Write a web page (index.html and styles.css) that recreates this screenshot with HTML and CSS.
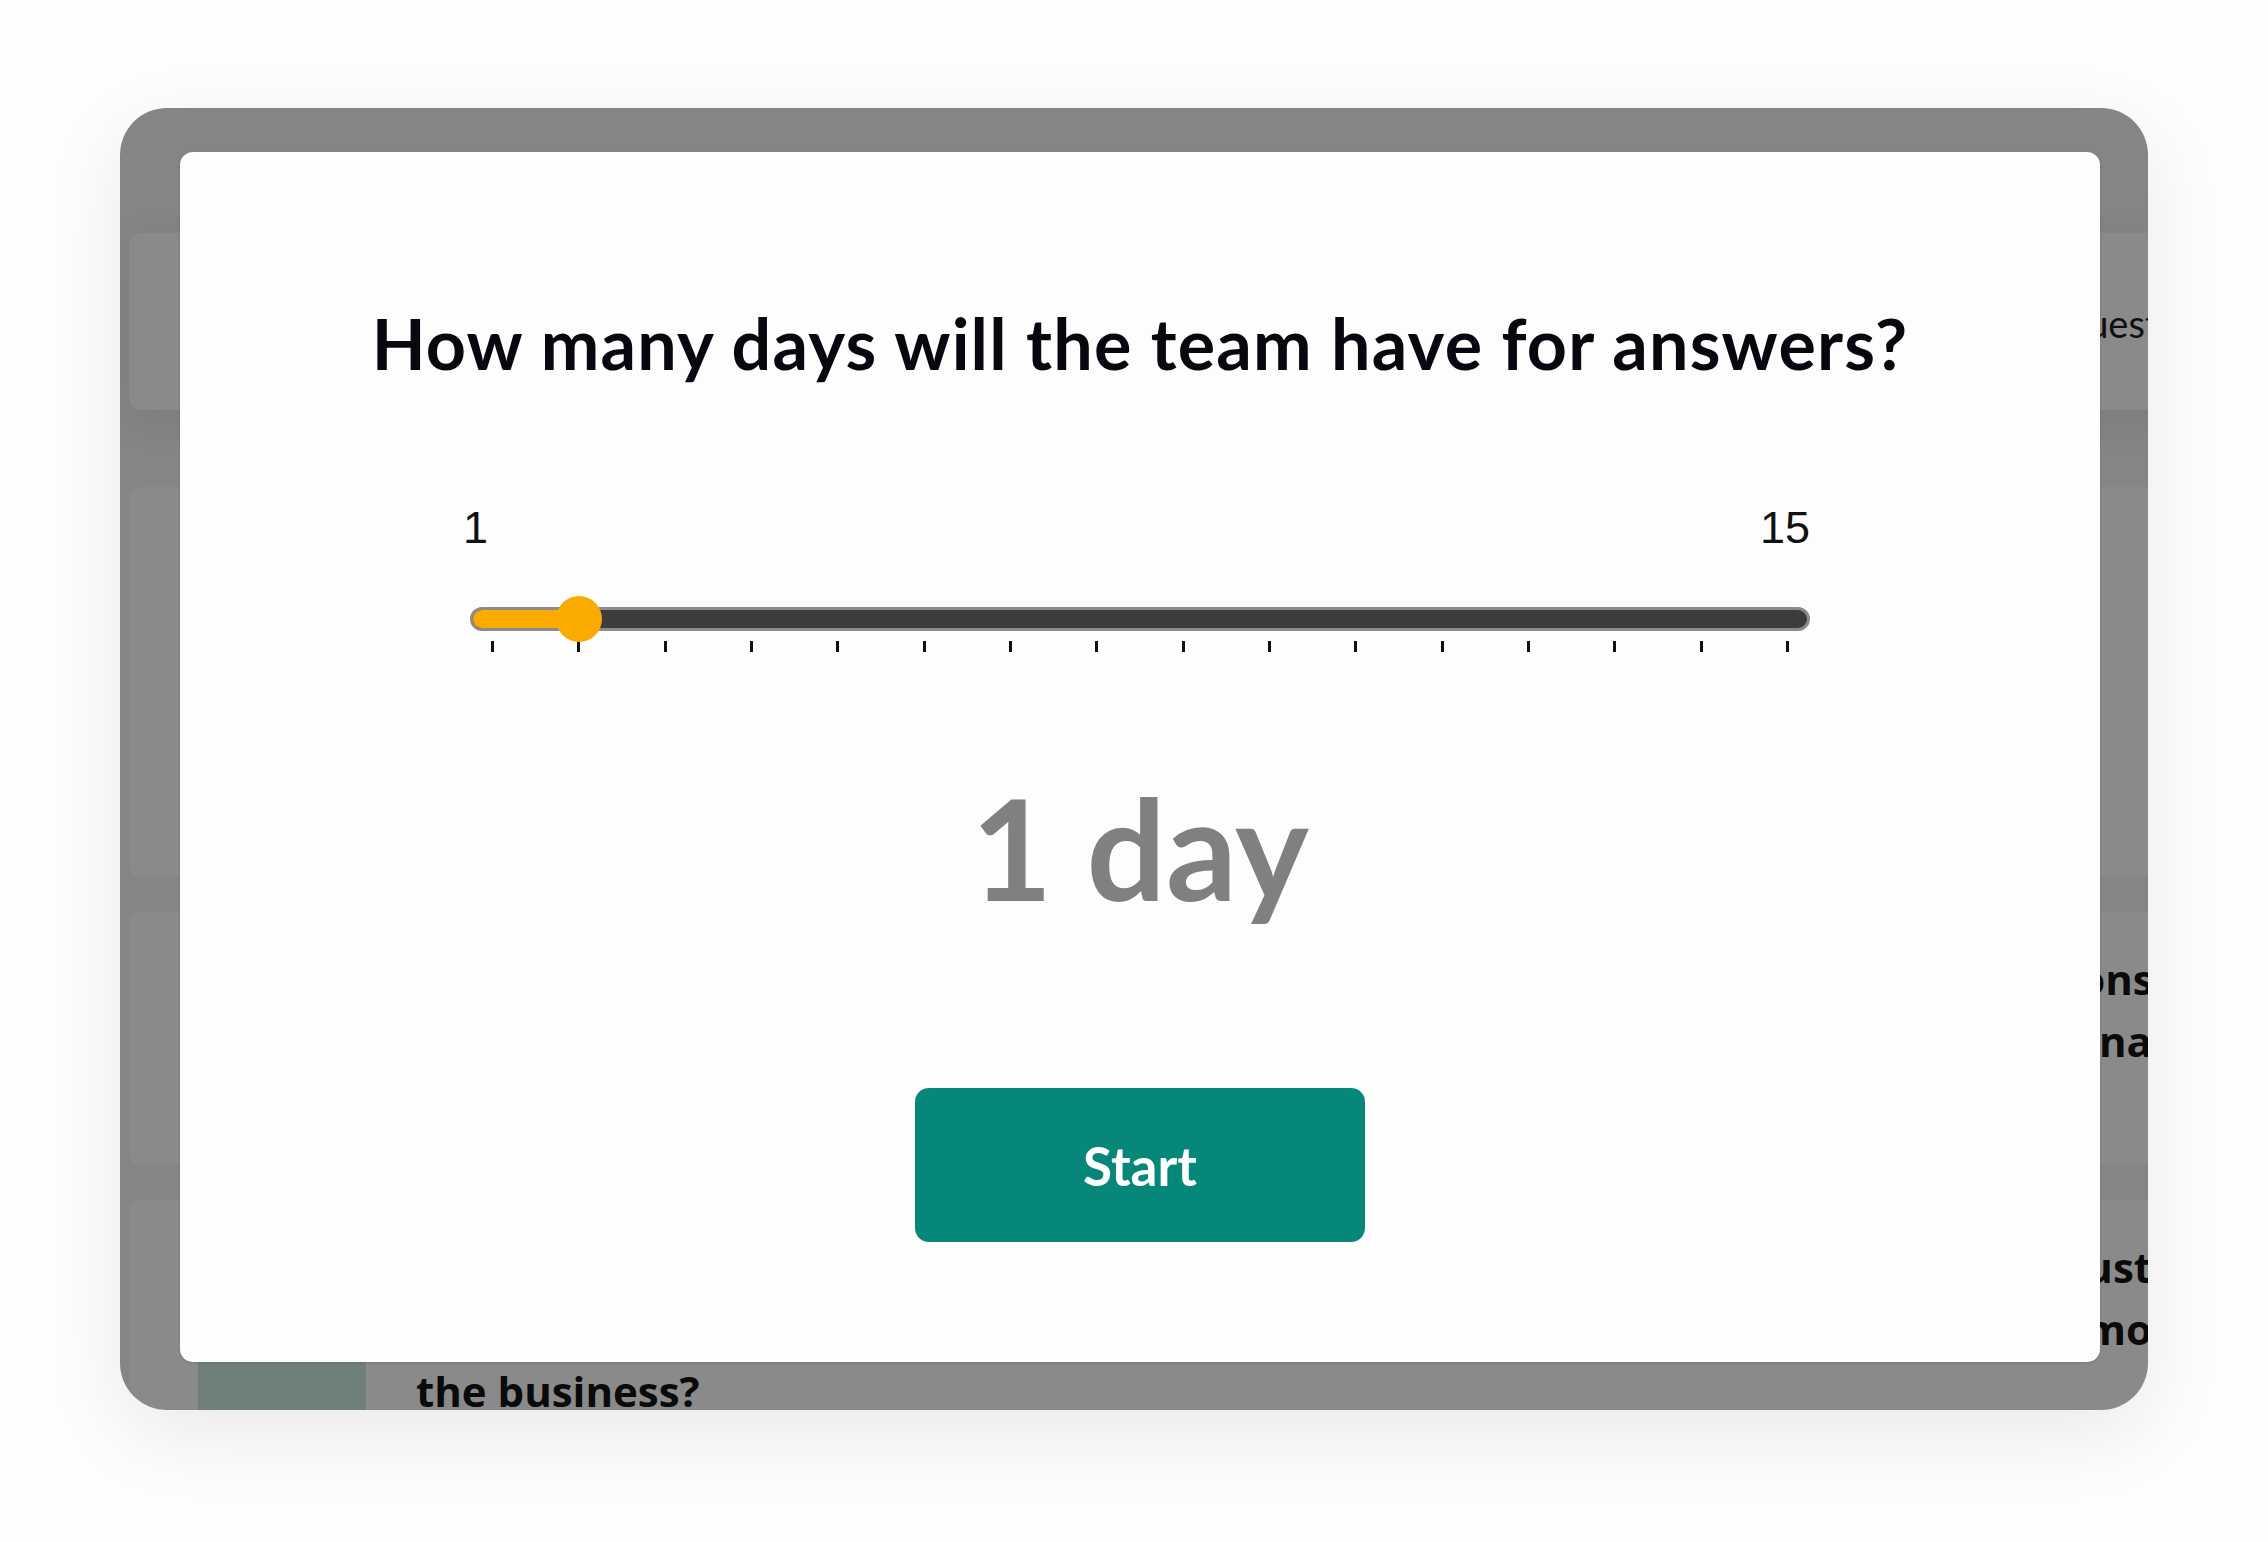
FILE: index.html
```html
<!DOCTYPE html>
<html lang="en">

<head>
    <meta charset="UTF-8" />
    <meta name="viewport" content="width=device-width, initial-scale=1.0" />
    <title>Team Questions</title>
    <link rel="stylesheet" href="styles.css">
</head>

<body>
    <div class="frame">
        <div class="app">
            <header class="app-header">
                <nav class="tabs">
                    <span>Questions</span>
                    <span>Answers</span>
                </nav>
            </header>

            <div class="question-list">
                <div class="list-head"></div>
                <div class="question-row">
                    <div class="thumb"></div>
                    <div class="question-text">
                        <span>What could we change to make our weekly team meetings and one-to-one sessions</span>
                        <span>more useful for everyone working across our offices in Ghana</span>
                    </div>
                </div>
                <div class="question-row">
                    <div class="thumb"></div>
                    <div class="question-text">
                        <span>Which of our products do you think our customers value most and trust</span>
                        <span>and what would you share about it in the weekly memo</span>
                        <span class="last">the business?</span>
                    </div>
                </div>
            </div>
        </div>

        <div class="overlay">
            <div class="modal">
                <h1 class="modal-title">How many days will the team have for answers?</h1>

                <div class="slider">
                    <div class="slider-labels">
                        <span>1</span>
                        <span>15</span>
                    </div>
                    <div class="track">
                        <div class="fill" style="width: 106px">
                            <div class="knob"></div>
                        </div>
                    </div>
                    <div class="ticks">
                        <i></i><i></i><i></i><i></i><i></i><i></i><i></i><i></i>
                        <i></i><i></i><i></i><i></i><i></i><i></i><i></i><i></i>
                    </div>
                </div>

                <div class="days">1 day</div>

                <button class="start-btn">Start</button>
            </div>
        </div>
    </div>
</body>

</html>
```

FILE: styles.css
```css
html,
body {
    margin: 0;
    height: 100%;
}

body {
    background: #fdfdfd;
    padding: 108px 0 0 120px;
    box-sizing: border-box;
    overflow: hidden;
    font-family: 'Lato', 'Liberation Sans', sans-serif;
}

.frame {
    position: relative;
    width: 2028px;
    height: 1302px;
    border-radius: 47px;
    overflow: hidden;
    background: #f5f5f5;
    box-shadow: 0 24px 80px rgba(0, 0, 0, 0.08);
}

/* page behind the dialog */

.app {
    padding: 125px 0 0 9px;
}

.app-header {
    display: flex;
    align-items: center;
    width: 2300px;
    height: 177px;
    padding-left: 1928px;
    box-sizing: border-box;
    background: #fff;
    border-radius: 12px;
    box-shadow: 0 10px 40px rgba(0, 0, 0, 0.07);
}

.tabs {
    display: flex;
    gap: 60px;
    font-size: 38px;
    color: #1c1c1c;
    padding-top: 2px;
}

.question-list {
    margin-top: 77px;
    display: flex;
    flex-direction: column;
    gap: 35px;
}

.list-head {
    width: 2300px;
    height: 390px;
    background: #fff;
    border-radius: 12px;
}

.question-row {
    display: flex;
    gap: 50px;
    width: 2300px;
    height: 253px;
    padding: 36px 0 0 69px;
    box-sizing: border-box;
    background: #fff;
    border-radius: 12px;
}

.thumb {
    flex: none;
    width: 168px;
    height: 200px;
    margin-top: -6px;
    border-radius: 8px;
    background: #cdede4;
}

.question-text {
    display: flex;
    flex-direction: column;
    width: 1736px;
    font-family: 'Open Sans', sans-serif;
    font-size: 42px;
    font-weight: 700;
    line-height: 62px;
    color: #141414;
    white-space: nowrap;
    text-align: right;
}

.question-text .last {
    text-align: left;
}

/* dialog */

.overlay {
    position: absolute;
    inset: 0;
    display: flex;
    padding: 44px 48px 48px 60px;
    background: rgba(0, 0, 0, 0.46);
}

.modal {
    flex: 1;
    display: flex;
    flex-direction: column;
    align-items: center;
    background: #fdfdfd;
    border-radius: 13px;
    box-shadow: 0 1px 3px rgba(0, 0, 0, 0.12);
}

.modal-title {
    margin: 149px 0 0;
    font-size: 70px;
    font-weight: 700;
    line-height: 84px;
    letter-spacing: 1.2px;
    color: #07080f;
}

.slider {
    width: 1340px;
    margin-top: 120px;
}

.slider-labels {
    display: flex;
    justify-content: space-between;
    margin: 0 0 0 -7px;
    font-family: 'Liberation Sans', Arial, sans-serif;
    font-size: 45px;
    line-height: 45px;
    color: #111;
}

.track {
    margin-top: 57px;
    height: 24px;
    box-sizing: border-box;
    border: 3px solid #8b8b8b;
    border-radius: 12px;
    background: #3c3c3c;
}

.fill {
    position: relative;
    height: 100%;
    border-radius: 9px;
    background: #fbab00;
}

.knob {
    position: absolute;
    right: -23px;
    top: -14px;
    width: 46px;
    height: 46px;
    border-radius: 50%;
    background: #fbab00;
}

.ticks {
    display: flex;
    justify-content: space-between;
    margin-top: 10px;
    padding: 0 21px;
}

.ticks i {
    width: 3px;
    height: 11px;
    background: #111;
}

.days {
    margin-top: 111px;
    font-size: 140px;
    font-weight: 700;
    line-height: 168px;
    color: #808080;
}

.start-btn {
    margin-top: 157px;
    width: 450px;
    height: 154px;
    border: none;
    border-radius: 14px;
    background: #06877a;
    color: #fff;
    font-family: 'Lato', sans-serif;
    font-size: 53px;
    font-weight: 700;
    cursor: pointer;
}
```
